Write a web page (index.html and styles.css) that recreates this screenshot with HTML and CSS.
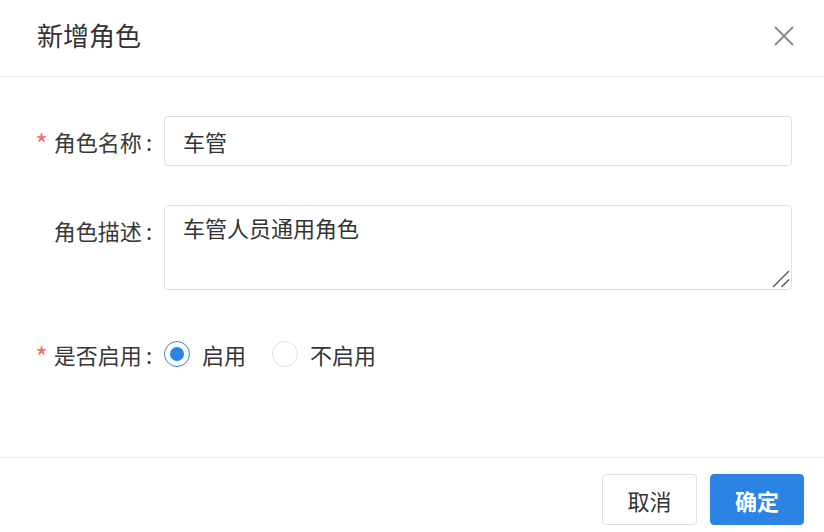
FILE: index.html
```html
<!DOCTYPE html>
<html lang="zh-CN">
<head>
<meta charset="utf-8">
<title>新增角色</title>
<link rel="stylesheet" href="styles.css">
</head>
<body>
<div class="dialog">
  <div class="dialog-header">
    <span class="dialog-title">新增角色</span>
    <button class="dialog-close" aria-label="关闭">
      <svg width="20" height="20" viewBox="0 0 20 20"><path d="M1 1 L19 19 M19 1 L1 19" stroke="#8c8c8c" stroke-width="2" fill="none"/></svg>
    </button>
  </div>
  <div class="dialog-body">
    <div class="form-item">
      <label class="form-label"><span class="req">*</span>角色名称<span class="colon">:</span></label>
      <div class="form-content">
        <input class="input" type="text" value="车管">
      </div>
    </div>
    <div class="form-item">
      <label class="form-label">角色描述<span class="colon">:</span></label>
      <div class="form-content textarea-wrap">
        <textarea class="textarea">车管人员通用角色</textarea>
        <svg class="grip" width="18" height="18" viewBox="0 0 18 18"><path d="M1 17 L17 1 M9.5 17 L17 9.5" stroke="#555" stroke-width="1.4" fill="none"/></svg>
      </div>
    </div>
    <div class="form-item">
      <label class="form-label"><span class="req">*</span>是否启用<span class="colon">:</span></label>
      <div class="form-content radio-group">
        <span class="radio"><span class="radio-dot checked"></span><span class="radio-text">启用</span></span>
        <span class="radio"><span class="radio-dot"></span><span class="radio-text">不启用</span></span>
      </div>
    </div>
  </div>
  <div class="dialog-footer">
    <button class="btn">取消</button>
    <button class="btn btn-primary">确定</button>
  </div>
</div>
</body>
</html>
```

FILE: styles.css
```css
* { box-sizing: border-box; }
html, body {
  margin: 0;
  padding: 0;
  background: #fff;
}
body {
  font-family: "Noto Sans CJK SC", "Noto Sans", sans-serif;
  color: #333;
}
.dialog {
  width: 824px;
}
.dialog-header {
  height: 77px;
  display: flex;
  align-items: center;
  justify-content: space-between;
  padding: 0 30px 6px 37px;
  border-bottom: 1px solid #ebebeb;
}
.dialog-title {
  font-size: 26px;
  line-height: 36px;
  color: #333;
}
.dialog-close {
  border: 0;
  background: none;
  padding: 0;
  width: 20px;
  height: 20px;
  display: flex;
  margin-top: 2px;
}
.dialog-body {
  padding: 39px 32px 0 20px;
  height: 380px;
}
.form-item {
  display: flex;
  margin-bottom: 39px;
}
.form-label {
  width: 144px;
  height: 50px;
  flex: none;
  display: flex;
  justify-content: flex-end;
  align-items: center;
  white-space: nowrap;
  padding-right: 12px;
  font-size: 22px;
  line-height: 30px;
  color: #383838;
}
.colon {
  margin-left: 4px;
}
.req {
  color: #f56c6c;
  margin-right: 6px;
  font-size: 27px;
  line-height: 1;
  margin-top: 5px;
}
.form-content {
  flex: 1;
}
.textarea-wrap {
  position: relative;
}
.input, .textarea {
  display: block;
  width: 100%;
  border: 1px solid #dcdfe6;
  border-radius: 4px;
  font-family: inherit;
  font-size: 22px;
  color: #333;
  padding: 0 18px;
  outline: none;
}
.input {
  height: 50px;
  line-height: 48px;
}
.textarea {
  height: 85px;
  padding-top: 6px;
  padding-bottom: 6px;
  line-height: 30px;
  resize: none;
}
.grip {
  position: absolute;
  right: 2px;
  bottom: 2px;
}
.radio-group {
  display: flex;
  align-items: center;
  height: 50px;
  gap: 26px;
}
.radio {
  display: flex;
  align-items: center;
  gap: 12px;
}
.radio-dot {
  width: 26px;
  height: 26px;
  border-radius: 50%;
  border: 1px solid #dcdfe6;
  background: #fff;
  display: flex;
  align-items: center;
  justify-content: center;
}
.radio-dot.checked {
  border-color: #2b85e4;
}
.radio-dot.checked::after {
  content: "";
  width: 14px;
  height: 14px;
  border-radius: 50%;
  background: #2b85e4;
}
.radio-text {
  font-size: 22px;
  line-height: 30px;
  color: #333;
}
.dialog-footer {
  border-top: 1px solid #ebebeb;
  display: flex;
  justify-content: flex-end;
  gap: 13px;
  padding: 16px 20px 0 0;
}
.btn {
  width: 95px;
  height: 51px;
  border: 1px solid #dcdfe6;
  border-radius: 4px;
  background: #fff;
  font-family: inherit;
  font-size: 22px;
  color: #333;
  padding: 0;
}
.btn-primary {
  width: 94px;
  background: #2b84e3;
  border-color: #2b84e3;
  color: #fff;
  font-weight: bold;
}
```
